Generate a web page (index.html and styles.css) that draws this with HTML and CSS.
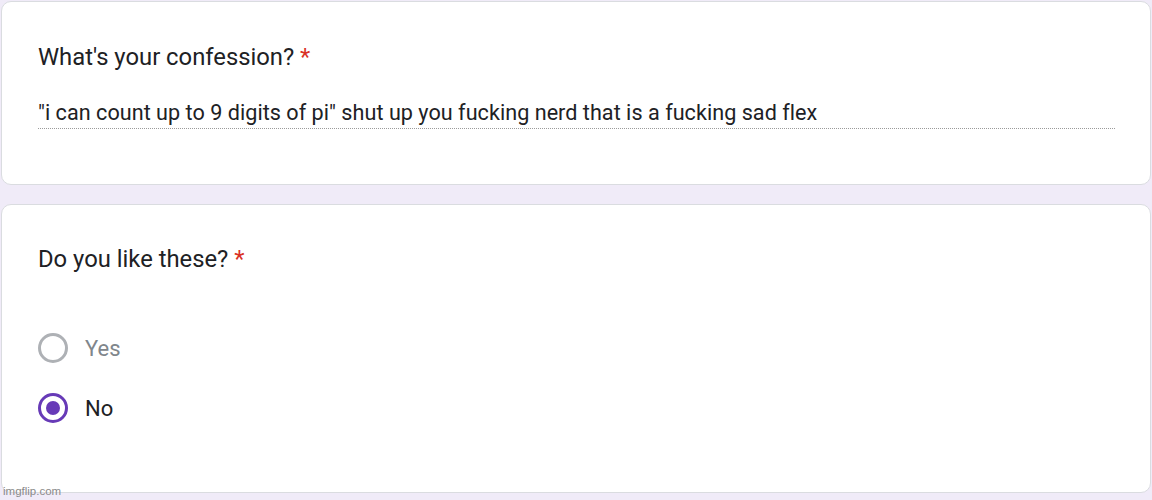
FILE: index.html
```html
<!DOCTYPE html>
<html>
<head>
<meta charset="utf-8">
<link rel="stylesheet" href="styles.css">
</head>
<body>
<div class="page">
  <div class="card card-text">
    <div class="title">What's your confession? <span class="req">*</span></div>
    <div class="answer">"i can count up to 9 digits of pi" shut up you fucking nerd that is a fucking sad flex</div>
  </div>
  <div class="card card-radio">
    <div class="title">Do you like these? <span class="req">*</span></div>
    <div class="options">
      <div class="option">
        <span class="radio"></span>
        <span class="label muted">Yes</span>
      </div>
      <div class="option">
        <span class="radio checked"></span>
        <span class="label">No</span>
      </div>
    </div>
  </div>
  <div class="watermark">imgflip.com</div>
</div>
</body>
</html>
```
FILE: styles.css
```css
html, body {
  margin: 0;
  padding: 0;
  background: #f0ebf8;
}
.page {
  position: relative;
  width: 1152px;
  height: 500px;
  padding: 1px 1px 0 1px;
  box-sizing: border-box;
  display: flex;
  flex-direction: column;
  gap: 19px;
  font-family: Roboto, "Liberation Sans", sans-serif;
  color: #202124;
}
.card {
  background: #fff;
  border: 1px solid #dadce0;
  border-radius: 10px;
  box-sizing: border-box;
  padding: 0 35px 0 36px;
}
.card-text {
  height: 184px;
  padding-top: 40px;
}
.card-radio {
  height: 289px;
  padding-top: 39px;
}
.title {
  font-size: 23.8px;
  line-height: 30px;
}
.req {
  color: #d93025;
}
.answer {
  margin-top: 28px;
  font-size: 21.6px;
  letter-spacing: 0.03px;
  line-height: 26px;
  padding-bottom: 2px;
  border-bottom: 1px dotted #9a9a9a;
}
.options {
  margin-top: 59px;
  display: flex;
  flex-direction: column;
  gap: 30px;
}
.option {
  display: flex;
  align-items: center;
  gap: 17px;
  height: 30px;
}
.radio {
  width: 30px;
  height: 30px;
  box-sizing: border-box;
  border: 3px solid #aeb1b5;
  border-radius: 50%;
  display: flex;
  align-items: center;
  justify-content: center;
}
.radio.checked {
  border-color: #673ab7;
}
.radio.checked::after {
  content: "";
  width: 14px;
  height: 14px;
  border-radius: 50%;
  background: #673ab7;
}
.label {
  font-size: 22px;
}
.muted {
  color: #80868b;
}
.watermark {
  position: absolute;
  left: 3px;
  bottom: 3px;
  font-family: "Liberation Sans", Arial, sans-serif;
  font-size: 11.5px;
  color: #8a8a8a;
}
```
